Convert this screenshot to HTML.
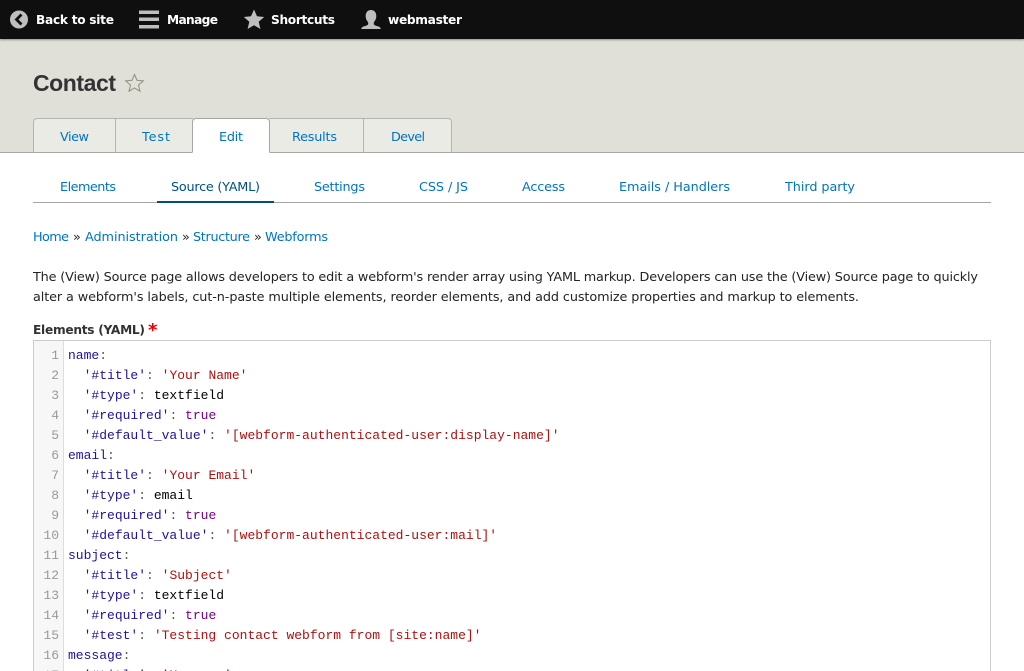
<!DOCTYPE html>
<html lang="en">
<head>
<meta charset="utf-8">
<title>Contact</title>
<style>
html,body{margin:0;padding:0;background:#fff;width:1024px;height:671px;overflow:hidden}
#p{position:relative;width:1024px;height:671px;overflow:hidden}
.b{position:absolute;box-sizing:border-box}
#bar{left:0;top:0;width:1024px;height:39px;background:#0f0f0f;box-shadow:0 1px 2px rgba(0,0,0,.35);z-index:2}
#head{left:0;top:39px;width:1024px;height:114px;background:#e0e0d8;border-bottom:1px solid #a6a6a6}
.tab{top:118px;height:35px;background:#ebebe6;border:1px solid #b5b5b0;border-bottom:1px solid #a6a6a6;border-right:0}
#edit{background:#fff;border:1px solid #a6a6a6;border-bottom:1px solid #fff;border-radius:4px 4px 0 0;z-index:1}
#line{left:33px;top:202px;width:958px;height:1px;background:#a6a6a6}
#act{left:157px;top:201px;width:117px;height:2px;background:#004f80}
#ed{left:33px;top:340px;width:958px;height:340px;border:1px solid #ccc;background:#fff}
#gut{left:34px;top:341px;width:30px;height:340px;background:#f7f7f7;border-right:1px solid #ddd}
svg{position:absolute;left:0;top:0;z-index:3}
text{font-family:"DejaVu Sans","Liberation Sans",sans-serif;font-size:12.8px;fill:#232323}
.w{font-weight:bold;fill:#fff;font-size:12.2px}
.l{fill:#0074bd}
.m{font-family:"Liberation Mono",monospace;font-size:13px;fill:#000;white-space:pre}
.n{font-family:"Liberation Mono",monospace;font-size:13px;fill:#999;text-anchor:end}
.a{fill:#221199}.s{fill:#aa1111}.k{fill:#770088}.u{fill:#555}
</style>
</head>
<body>
<div id="p">
<div class="b" id="bar"></div>
<div class="b" id="head"></div>
<div class="b tab" style="left:33px;width:83px;border-radius:4px 0 0 0"></div>
<div class="b tab" style="left:115px;width:78px"></div>
<div class="b tab" id="edit" style="left:192px;width:78px"></div>
<div class="b tab" style="left:269px;width:95px;border-left:0"></div>
<div class="b tab" style="left:363px;width:89px;border-right:1px solid #b5b5b0;border-radius:0 4px 0 0"></div>
<div class="b" id="line"></div>
<div class="b" id="act"></div>
<div class="b" id="ed"></div>
<div class="b" id="gut"></div>
<svg width="1024" height="671" viewBox="0 0 1024 671">
<circle cx="19" cy="19.500" r="9" fill="#bebebe"/>
<path d="M21.500 14.500L16.500 19.500L21.500 24.500" fill="none" stroke="#0f0f0f" stroke-width="2.800"/>
<path d="M139 10.500h20v3.500h-20zM139 17.500h20v3.500h-20zM139 25h20v3.500h-20z" fill="#bebebe"/>
<path d="M254 9.500l3 6.800 7.200.7-5.500 4.800 1.700 7.200-6.400-3.800-6.400 3.800 1.700-7.200-5.500-4.800 7.200-.7z" fill="#bebebe"/>
<path d="M371 10c3.500 0 5.300 2.700 5.300 6 0 2.700-1.200 5-2.500 6.200v1.800c0 1 2 1.700 4 2.300 1.500.5 2.700 1.200 3 2.700h-19.600c.3-1.500 1.500-2.200 3-2.700 2-.6 4-1.300 4-2.300v-1.800c-1.300-1.200-2.500-3.500-2.500-6.200 0-3.300 1.800-6 5.300-6z" fill="#bebebe"/>
<path d="M134.500 74.500l2.500 5.800 6.300.6-4.800 4.100 1.500 6.200-5.500-3.300-5.500 3.300 1.500-6.200-4.800-4.100 6.300-.6z" fill="none" stroke="#8e8e80" stroke-width="1"/>

<text class="w" x="36" y="24" textLength="78" lengthAdjust="spacing">Back to site</text>
<text class="w" x="167" y="24" textLength="51" lengthAdjust="spacing">Manage</text>
<text class="w" x="271" y="24" textLength="64" lengthAdjust="spacing">Shortcuts</text>
<text class="w" x="388" y="24" textLength="74" lengthAdjust="spacing">webmaster</text>

<text x="33" y="91" textLength="83" lengthAdjust="spacing" style="font-family:'Liberation Sans',sans-serif;font-size:23px;font-weight:bold;fill:#333">Contact</text>

<text class="l" x="60" y="141" textLength="29" lengthAdjust="spacing">View</text>
<text class="l" x="142" y="141" textLength="28" lengthAdjust="spacing">Test</text>
<text class="l" x="219" y="141" textLength="24" lengthAdjust="spacing">Edit</text>
<text class="l" x="292" y="141" textLength="45" lengthAdjust="spacing">Results</text>
<text class="l" x="391" y="141" textLength="34" lengthAdjust="spacing">Devel</text>

<text class="l" x="60" y="191" textLength="56" lengthAdjust="spacing">Elements</text>
<text x="171" y="191" textLength="89" lengthAdjust="spacing" style="fill:#004f80">Source (YAML)</text>
<text class="l" x="314" y="191" textLength="51" lengthAdjust="spacing">Settings</text>
<text class="l" x="419" y="191" textLength="49" lengthAdjust="spacing">CSS / JS</text>
<text class="l" x="522" y="191" textLength="43" lengthAdjust="spacing">Access</text>
<text class="l" x="619" y="191" textLength="111" lengthAdjust="spacing">Emails / Handlers</text>
<text class="l" x="785" y="191" textLength="70" lengthAdjust="spacing">Third party</text>

<text class="l" x="33" y="241" textLength="36" lengthAdjust="spacing">Home</text>
<text x="73" y="241">»</text>
<text class="l" x="85" y="241" textLength="93" lengthAdjust="spacing">Administration</text>
<text x="182" y="241">»</text>
<text class="l" x="193" y="241" textLength="57" lengthAdjust="spacing">Structure</text>
<text x="254" y="241">»</text>
<text class="l" x="265" y="241" textLength="63" lengthAdjust="spacing">Webforms</text>

<text x="33" y="281" textLength="945" lengthAdjust="spacing">The (View) Source page allows developers to edit a webform's render array using YAML markup. Developers can use the (View) Source page to quickly</text>
<text x="33" y="301" textLength="826" lengthAdjust="spacing">alter a webform's labels, cut-n-paste multiple elements, reorder elements, and add customize properties and markup to elements.</text>

<text x="33" y="334" textLength="112" lengthAdjust="spacing" style="font-size:12.2px;font-weight:bold;fill:#333">Elements (YAML)</text>
<text x="148" y="336" style="font-size:18px;font-weight:bold;fill:#e00">*</text>

<text class="n" x="59" y="359">1</text>
<text class="n" x="59" y="379">2</text>
<text class="n" x="59" y="399">3</text>
<text class="n" x="59" y="419">4</text>
<text class="n" x="59" y="439">5</text>
<text class="n" x="59" y="459">6</text>
<text class="n" x="59" y="479">7</text>
<text class="n" x="59" y="499">8</text>
<text class="n" x="59" y="519">9</text>
<text class="n" x="59" y="539">10</text>
<text class="n" x="59" y="559">11</text>
<text class="n" x="59" y="579">12</text>
<text class="n" x="59" y="599">13</text>
<text class="n" x="59" y="619">14</text>
<text class="n" x="59" y="639">15</text>
<text class="n" x="59" y="659">16</text>
<text class="n" x="59" y="679">17</text>

<text class="m" x="68" y="359"><tspan class="a">name</tspan><tspan class="u">:</tspan></text>
<text class="m" x="68" y="379">  <tspan class="a">'#title'</tspan><tspan class="u">: </tspan><tspan class="s">'Your Name'</tspan></text>
<text class="m" x="68" y="399">  <tspan class="a">'#type'</tspan><tspan class="u">: </tspan>textfield</text>
<text class="m" x="68" y="419">  <tspan class="a">'#required'</tspan><tspan class="u">: </tspan><tspan class="k">true</tspan></text>
<text class="m" x="68" y="439">  <tspan class="a">'#default_value'</tspan><tspan class="u">: </tspan><tspan class="s">'[webform-authenticated-user:display-name]'</tspan></text>
<text class="m" x="68" y="459"><tspan class="a">email</tspan><tspan class="u">:</tspan></text>
<text class="m" x="68" y="479">  <tspan class="a">'#title'</tspan><tspan class="u">: </tspan><tspan class="s">'Your Email'</tspan></text>
<text class="m" x="68" y="499">  <tspan class="a">'#type'</tspan><tspan class="u">: </tspan>email</text>
<text class="m" x="68" y="519">  <tspan class="a">'#required'</tspan><tspan class="u">: </tspan><tspan class="k">true</tspan></text>
<text class="m" x="68" y="539">  <tspan class="a">'#default_value'</tspan><tspan class="u">: </tspan><tspan class="s">'[webform-authenticated-user:mail]'</tspan></text>
<text class="m" x="68" y="559"><tspan class="a">subject</tspan><tspan class="u">:</tspan></text>
<text class="m" x="68" y="579">  <tspan class="a">'#title'</tspan><tspan class="u">: </tspan><tspan class="s">'Subject'</tspan></text>
<text class="m" x="68" y="599">  <tspan class="a">'#type'</tspan><tspan class="u">: </tspan>textfield</text>
<text class="m" x="68" y="619">  <tspan class="a">'#required'</tspan><tspan class="u">: </tspan><tspan class="k">true</tspan></text>
<text class="m" x="68" y="639">  <tspan class="a">'#test'</tspan><tspan class="u">: </tspan><tspan class="s">'Testing contact webform from [site:name]'</tspan></text>
<text class="m" x="68" y="659"><tspan class="a">message</tspan><tspan class="u">:</tspan></text>
<text class="m" x="68" y="679">  <tspan class="a">'#title'</tspan><tspan class="u">: </tspan><tspan class="s">'Message'</tspan></text>
</svg>
</div>
</body>
</html>
